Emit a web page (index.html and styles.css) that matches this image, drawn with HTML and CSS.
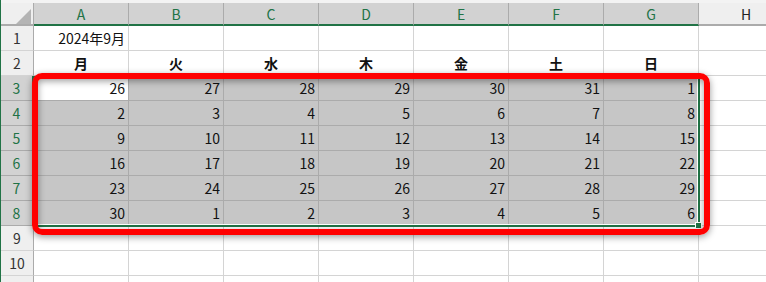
FILE: index.html
```html
<!DOCTYPE html>
<html lang="ja">
<head>
    <meta charset="UTF-8">
    <title>2024年9月 カレンダー</title>
    <link rel="stylesheet" href="styles.css">
</head>
<body>
    <div class="sheet">
        <div class="grid" id="grid">
            <div class="corner">
                <svg width="33" height="23" viewBox="0 0 33 23"><polygon points="30,6 30,21 15,21" fill="#b4b4b4"/></svg>
            </div>
        </div>
        <div class="selection"><span class="handle"></span></div>
        <div class="marker"></div>
    </div>

    <script>
        const grid = document.getElementById('grid');
        const cols = ['A', 'B', 'C', 'D', 'E', 'F', 'G', 'H'];
        const days = ['月', '火', '水', '木', '金', '土', '日'];
        const weeks = [
            [26, 27, 28, 29, 30, 31, 1],
            [2, 3, 4, 5, 6, 7, 8],
            [9, 10, 11, 12, 13, 14, 15],
            [16, 17, 18, 19, 20, 21, 22],
            [23, 24, 25, 26, 27, 28, 29],
            [30, 1, 2, 3, 4, 5, 6]
        ];

        function cell(cls, text) {
            const el = document.createElement('div');
            el.className = cls;
            if (text !== undefined) el.textContent = text;
            grid.appendChild(el);
        }

        // column headers
        cols.forEach((c, i) => cell(i < 7 ? 'col-head sel' : 'col-head', c));

        // row 11 only peeks in at the bottom edge, so its number stays out of view
        for (let r = 1; r <= 11; r++) {
            const inSel = r >= 3 && r <= 8;
            cell(inSel ? 'row-head sel' : 'row-head', r < 11 ? r : undefined);
            for (let c = 0; c < 8; c++) {
                let cls = 'cell';
                let text;
                if (r === 1 && c === 0) text = '2024年9月';
                if (r === 2 && c < 7) { cls += ' day'; text = days[c]; }
                if (inSel && c < 7) {
                    cls += (r === 3 && c === 0) ? ' active' : ' picked';
                    text = weeks[r - 3][c];
                }
                cell(cls, text);
            }
        }
    </script>
</body>
</html>
```

FILE: styles.css
```css
* {
    box-sizing: border-box;
}
body {
    margin: 0;
    background: #ffffff;
    font-family: "Noto Sans CJK JP", "Noto Sans", sans-serif;
    overflow: hidden;
}
.sheet {
    position: relative;
    width: 766px;
    height: 282px;
    padding-top: 3px;
    background: #f3f3f3;
    border-left: 1px solid #217346;
    overflow: hidden;
}
.grid {
    display: grid;
    grid-template-columns: 33px repeat(8, 95px);
    grid-template-rows: 23px repeat(11, 25px);
    background: #ffffff;
}
.corner {
    background: #efefef;
    border-right: 1px solid #ababab;
    border-bottom: 2px solid #ababab;
}
.corner svg {
    display: block;
}
.col-head {
    display: flex;
    align-items: center;
    justify-content: center;
    background: #efefef;
    border-right: 1px solid #ababab;
    border-bottom: 2px solid #ababab;
    font-size: 14px;
    color: #222222;
}
.col-head.sel {
    background: #d2d2d2;
    color: #217346;
    border-bottom-color: #217346;
}
.row-head {
    display: flex;
    align-items: center;
    justify-content: center;
    background: #efefef;
    border-right: 1px solid #ababab;
    border-bottom: 1px solid #d4d4d4;
    font-size: 14px;
    color: #333333;
}
.row-head.sel {
    background: #d2d2d2;
    color: #217346;
    border-right: 2px solid #217346;
    border-bottom-color: #ababab;
}
.cell {
    display: flex;
    align-items: center;
    justify-content: flex-end;
    padding-right: 3px;
    border-right: 1px solid #d4d4d4;
    border-bottom: 1px solid #d4d4d4;
    font-size: 14px;
    color: #111111;
    white-space: nowrap;
}
.cell.day {
    justify-content: center;
    font-weight: bold;
    padding-right: 0;
}
.cell.picked {
    background: #c6c6c6;
    border-color: #ababab;
}
.cell.active {
    background: #ffffff;
    border-color: #ababab;
}
.selection {
    position: absolute;
    left: 32px;
    top: 76px;
    width: 667px;
    height: 151px;
    border: 2px solid #217346;
    box-shadow: inset 0 0 0 1px #ffffff;
}
.handle {
    position: absolute;
    right: -4px;
    bottom: -4px;
    width: 7px;
    height: 7px;
    background: #217346;
    border: 1px solid #ffffff;
}
.marker {
    position: absolute;
    left: 31px;
    top: 73px;
    width: 678px;
    height: 162px;
    border: 6px solid #ff0000;
    border-radius: 10px;
    box-shadow: 0 2px 7px rgba(0, 0, 0, 0.4), inset 0 2px 7px rgba(0, 0, 0, 0.4);
}
```
